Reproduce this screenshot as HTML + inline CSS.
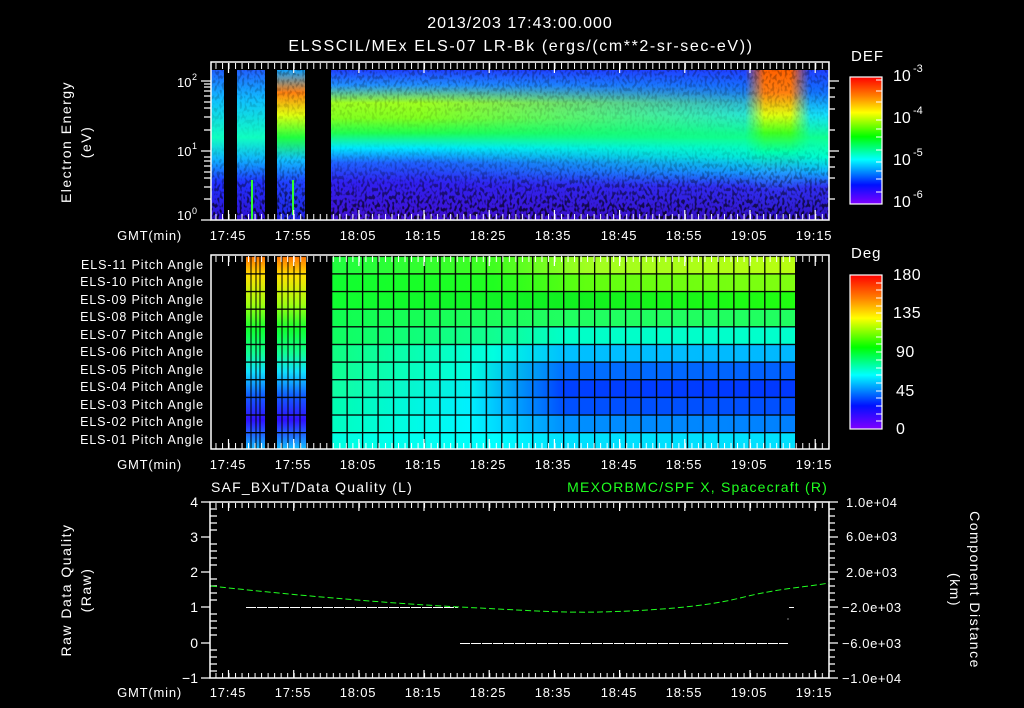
<!DOCTYPE html>
<html><head><meta charset="utf-8"><style>
html,body{margin:0;padding:0;background:#000;width:1024px;height:708px;overflow:hidden}
svg{display:block}
text{font-family:"Liberation Sans",sans-serif;fill:#fff}
</style></head><body>
<svg width="1024" height="708" viewBox="0 0 1024 708" xmlns="http://www.w3.org/2000/svg">
<defs>
<linearGradient id="cb" x1="0" y1="0" x2="0" y2="1">
<stop offset="0" stop-color="#ff0000"/><stop offset=".15" stop-color="#ff8000"/><stop offset=".28" stop-color="#ffff00"/><stop offset=".47" stop-color="#00ff00"/><stop offset=".65" stop-color="#00ffff"/><stop offset=".85" stop-color="#0010ff"/><stop offset="1" stop-color="#8000ff"/></linearGradient>
<linearGradient id="sD" x1="0" y1="0" x2="0" y2="1">
<stop offset="0" stop-color="#2040ff"/><stop offset=".1" stop-color="#2090ff"/><stop offset=".22" stop-color="#a0ff20"/><stop offset=".32" stop-color="#80ff20"/><stop offset=".42" stop-color="#20ff50"/><stop offset=".52" stop-color="#00e8ff"/><stop offset=".62" stop-color="#2060ff"/><stop offset=".75" stop-color="#3020f0"/><stop offset="1" stop-color="#4010d0"/></linearGradient>
<linearGradient id="sE" x1="0" y1="0" x2="0" y2="1">
<stop offset="0" stop-color="#2040ff"/><stop offset=".15" stop-color="#1070ff"/><stop offset=".3" stop-color="#10e0ff"/><stop offset=".45" stop-color="#10ff90"/><stop offset=".58" stop-color="#00ffd0"/><stop offset=".68" stop-color="#10b0ff"/><stop offset=".78" stop-color="#3030f0"/><stop offset="1" stop-color="#3010c0"/></linearGradient>
<linearGradient id="sF" x1="0" y1="0" x2="0" y2="1">
<stop offset="0" stop-color="#ff6000"/><stop offset=".15" stop-color="#ff8010"/><stop offset=".3" stop-color="#e0ff10"/><stop offset=".42" stop-color="#40ff20"/><stop offset=".55" stop-color="#00ffb0"/><stop offset=".68" stop-color="#20a0ff"/><stop offset=".8" stop-color="#3030f0"/><stop offset="1" stop-color="#3010c0"/></linearGradient>
<linearGradient id="sC" x1="0" y1="0" x2="0" y2="1">
<stop offset="0" stop-color="#10a0ff"/><stop offset=".15" stop-color="#ff8010"/><stop offset=".3" stop-color="#e0ff10"/><stop offset=".45" stop-color="#20ff40"/><stop offset=".6" stop-color="#10c0ff"/><stop offset=".75" stop-color="#2040ff"/><stop offset="1" stop-color="#2020e0"/></linearGradient>
<linearGradient id="sA" x1="0" y1="0" x2="0" y2="1">
<stop offset="0" stop-color="#2060ff"/><stop offset=".2" stop-color="#10c0ff"/><stop offset=".45" stop-color="#10ffc0"/><stop offset=".6" stop-color="#10b0ff"/><stop offset=".75" stop-color="#2030ff"/><stop offset="1" stop-color="#3010d0"/></linearGradient>
<linearGradient id="blendDE"><stop offset="0" stop-color="#000" stop-opacity="0"/><stop offset="1" stop-color="#000" stop-opacity="1"/></linearGradient>
<linearGradient id="fadeL"><stop offset="0" stop-color="#fff" stop-opacity="0"/><stop offset="1" stop-color="#fff" stop-opacity="1"/></linearGradient>
<linearGradient id="fadeLR"><stop offset="0" stop-color="#fff" stop-opacity="0"/><stop offset=".3" stop-color="#fff" stop-opacity="1"/><stop offset=".7" stop-color="#fff" stop-opacity="1"/><stop offset="1" stop-color="#fff" stop-opacity="0"/></linearGradient>
<mask id="mE"><rect x="420" y="62" width="410" height="160" fill="url(#fadeL)"/></mask>
<mask id="mF"><rect x="745" y="62" width="65" height="160" fill="url(#fadeLR)"/></mask>
<linearGradient id="hmask" x1="0" y1="0" x2="0" y2="1">
<stop offset="0" stop-color="#fff" stop-opacity=".3"/><stop offset=".5" stop-color="#fff" stop-opacity=".0"/><stop offset=".7" stop-color="#fff" stop-opacity=".25"/><stop offset="1" stop-color="#fff" stop-opacity=".8"/></linearGradient>
<mask id="nm"><rect x="211" y="62" width="618" height="158" fill="url(#hmask)"/></mask>
<filter id="noise" x="0" y="0" width="100%" height="100%">
<feTurbulence type="fractalNoise" baseFrequency="0.4 0.25" numOctaves="1" seed="4"/>
<feColorMatrix type="matrix" values="0 0 0 0 0  0 0 0 0 0  0 0 0 0 0  0 0 0 -7 3.6"/>
</filter>
<pattern id="tx" patternUnits="userSpaceOnUse" x="228.5" y="0" width="6.52" height="708"><rect x="0" y="0" width="1" height="708" fill="#fff"/></pattern>
<pattern id="gcol" patternUnits="userSpaceOnUse" x="331" y="0" width="15.47" height="708"><rect x="0" y="0" width="1.3" height="708" fill="#000"/></pattern>
<pattern id="grow" patternUnits="userSpaceOnUse" x="0" y="255.6" width="1024" height="17.64"><rect x="0" y="0" width="1024" height="1.3" fill="#000"/></pattern>
<linearGradient id="pr0"><stop offset="0" stop-color="#20ff40"/><stop offset=".35" stop-color="#40ff20"/><stop offset=".55" stop-color="#a0ff20"/><stop offset="1" stop-color="#b8ff10"/></linearGradient>
<linearGradient id="pr1"><stop offset="0" stop-color="#10ff30"/><stop offset=".35" stop-color="#20ff20"/><stop offset=".55" stop-color="#60ff10"/><stop offset="1" stop-color="#80ff10"/></linearGradient>
<linearGradient id="pr2"><stop offset="0" stop-color="#10ff30"/><stop offset=".5" stop-color="#10f020"/><stop offset="1" stop-color="#20ff10"/></linearGradient>
<linearGradient id="pr3"><stop offset="0" stop-color="#10ff50"/><stop offset=".5" stop-color="#20ff60"/><stop offset="1" stop-color="#20ff60"/></linearGradient>
<linearGradient id="pr4"><stop offset="0" stop-color="#10ff60"/><stop offset=".35" stop-color="#10ff90"/><stop offset=".5" stop-color="#00ffc8"/><stop offset="1" stop-color="#00ffcc"/></linearGradient>
<linearGradient id="pr5"><stop offset="0" stop-color="#10ff80"/><stop offset=".35" stop-color="#00ffe0"/><stop offset=".5" stop-color="#00c0ff"/><stop offset="1" stop-color="#00b8ff"/></linearGradient>
<linearGradient id="pr6"><stop offset="0" stop-color="#10ff90"/><stop offset=".3" stop-color="#00ffe0"/><stop offset=".5" stop-color="#0070ff"/><stop offset="1" stop-color="#0060ff"/></linearGradient>
<linearGradient id="pr7"><stop offset="0" stop-color="#10ffa0"/><stop offset=".3" stop-color="#00f0f0"/><stop offset=".5" stop-color="#0040ff"/><stop offset="1" stop-color="#0038ff"/></linearGradient>
<linearGradient id="pr8"><stop offset="0" stop-color="#00ffb0"/><stop offset=".3" stop-color="#00f0ff"/><stop offset=".5" stop-color="#0050ff"/><stop offset="1" stop-color="#0050ff"/></linearGradient>
<linearGradient id="pr9"><stop offset="0" stop-color="#00ffc0"/><stop offset=".3" stop-color="#00f8ff"/><stop offset=".5" stop-color="#0090ff"/><stop offset="1" stop-color="#0080ff"/></linearGradient>
<linearGradient id="pr10"><stop offset="0" stop-color="#00ffe0"/><stop offset=".35" stop-color="#00ffff"/><stop offset=".5" stop-color="#00e0ff"/><stop offset="1" stop-color="#00e0ff"/></linearGradient>
<linearGradient id="strip" x1="0" y1="0" x2="0" y2="1">
<stop offset="0" stop-color="#ff7000"/><stop offset=".1" stop-color="#ffe000"/><stop offset=".25" stop-color="#a0ff10"/><stop offset=".38" stop-color="#10ff30"/><stop offset=".5" stop-color="#10ff90"/><stop offset=".6" stop-color="#10e0ff"/><stop offset=".72" stop-color="#1060ff"/><stop offset=".85" stop-color="#3010ff"/><stop offset="1" stop-color="#10c0ff"/></linearGradient>
</defs>

<!-- titles -->
<text x="520" y="28" font-size="16" text-anchor="middle" letter-spacing="1">2013/203 17:43:00.000</text>
<text x="521" y="51" font-size="16" text-anchor="middle" letter-spacing="1.6">ELSSCIL/MEx ELS-07 LR-Bk  (ergs/(cm**2-sr-sec-eV))</text>

<!-- PANEL 1 spectrogram -->
<rect x="211" y="70" width="13" height="150" fill="url(#sA)"/>
<rect x="237" y="70" width="28" height="150" fill="url(#sA)"/>
<rect x="277" y="70" width="28" height="150" fill="url(#sC)"/>
<rect x="331" y="70" width="498" height="150" fill="url(#sD)"/>
<rect x="331" y="70" width="498" height="150" fill="url(#sE)" mask="url(#mE)"/>
<rect x="745" y="70" width="65" height="150" fill="url(#sF)" mask="url(#mF)"/>
<rect x="211" y="62" width="618" height="158" filter="url(#noise)" mask="url(#nm)"/>
<rect x="224" y="62" width="13" height="158" fill="#000"/>
<rect x="265" y="62" width="12" height="158" fill="#000"/>
<rect x="305" y="62" width="26" height="158" fill="#000"/>
<rect x="251" y="180" width="2" height="40" fill="#30ff30"/>
<rect x="292" y="180" width="2" height="35" fill="#30ff30"/>
<rect x="211" y="62" width="618" height="158" fill="none" stroke="#fff" stroke-width="1.5"/>
<rect x="211" y="63" width="618" height="6" fill="url(#tx)"/>
<rect x="211" y="214" width="618" height="6" fill="url(#tx)"/>
<g stroke="#fff" stroke-width="1.2">
<path d="M228.5 63v10M293.7 63v10M358.9 63v10M424 63v10M489.2 63v10M554.4 63v10M619.6 63v10M684.8 63v10M750 63v10M815.2 63v10"/>
<path d="M228.5 220v-10M293.7 220v-10M358.9 220v-10M424 220v-10M489.2 220v-10M554.4 220v-10M619.6 220v-10M684.8 220v-10M750 220v-10M815.2 220v-10"/>
<path d="M201 220h10M201 151h10M201 81h10M204 199h7M204 187h7M204 178h7M204 172h7M204 166h7M204 161h7M204 157h7M204 130h7M204 117h7M204 108h7M204 102h7M204 96h7M204 91h7M204 87h7M204 84h7"/>
<path d="M829 81h10M829 151h10M829 88h6M829 97h6M829 109h6M829 130h6M829 157h6M829 167h6M829 178h6M829 199h6"/>
</g>
<text x="177" y="220" font-size="13">10</text><text x="192" y="214" font-size="9">0</text>
<text x="177" y="156" font-size="13">10</text><text x="192" y="149" font-size="9">1</text>
<text x="177" y="87" font-size="13">10</text><text x="192" y="80" font-size="9">2</text>
<text transform="translate(71,142) rotate(-90)" font-size="14" text-anchor="middle" letter-spacing="1.5">Electron Energy</text>
<text transform="translate(91,142) rotate(-90)" font-size="14" text-anchor="middle" letter-spacing="1.5">(eV)</text>
<g font-size="13" letter-spacing="0.8">
<text x="182" y="240" text-anchor="end">GMT(min)</text>
<text x="228" y="240" text-anchor="middle">17:45</text><text x="293" y="240" text-anchor="middle">17:55</text><text x="358" y="240" text-anchor="middle">18:05</text><text x="423" y="240" text-anchor="middle">18:15</text><text x="488" y="240" text-anchor="middle">18:25</text><text x="553" y="240" text-anchor="middle">18:35</text><text x="619" y="240" text-anchor="middle">18:45</text><text x="684" y="240" text-anchor="middle">18:55</text><text x="749" y="240" text-anchor="middle">19:05</text><text x="814" y="240" text-anchor="middle">19:15</text>
</g>
<!-- DEF colorbar -->
<text x="851" y="61" font-size="15" letter-spacing="1">DEF</text>
<rect x="850" y="77" width="32" height="127" fill="url(#cb)" stroke="#fff" stroke-width="1.2"/>
<g stroke="#fff"><path d="M876 80h6M876 91h6M876 102h6M876 120h6M876 129h6M876 137h6M876 150h6M876 162h6M876 171h6M876 179h6M876 192h6"/></g>
<g font-size="16"><text x="893" y="81">10</text><text x="913" y="72" font-size="11">-3</text>
<text x="893" y="123">10</text><text x="913" y="114" font-size="11">-4</text>
<text x="893" y="165">10</text><text x="913" y="156" font-size="11">-5</text>
<text x="893" y="207">10</text><text x="913" y="198" font-size="11">-6</text></g>

<!-- PANEL 2 pitch -->
<rect x="331" y="256" width="464" height="17.7" fill="url(#pr0)"/>
<rect x="331" y="273.6" width="464" height="17.7" fill="url(#pr1)"/>
<rect x="331" y="291.2" width="464" height="17.7" fill="url(#pr2)"/>
<rect x="331" y="308.8" width="464" height="17.7" fill="url(#pr3)"/>
<rect x="331" y="326.4" width="464" height="17.7" fill="url(#pr4)"/>
<rect x="331" y="344" width="464" height="17.7" fill="url(#pr5)"/>
<rect x="331" y="361.6" width="464" height="17.7" fill="url(#pr6)"/>
<rect x="331" y="379.2" width="464" height="17.7" fill="url(#pr7)"/>
<rect x="331" y="396.8" width="464" height="17.7" fill="url(#pr8)"/>
<rect x="331" y="414.4" width="464" height="17.7" fill="url(#pr9)"/>
<rect x="331" y="432" width="464" height="17.4" fill="url(#pr10)"/>
<rect x="246" y="256" width="19" height="193" fill="url(#strip)"/>
<rect x="277" y="256" width="29" height="193" fill="url(#strip)"/>
<rect x="331" y="256" width="466" height="193" fill="url(#gcol)"/>
<rect x="246" y="256" width="551" height="193" fill="url(#grow)"/>
<g stroke="#000" stroke-width="1"><path d="M251 256v193M256 256v193M260 256v193M282 256v193M288 256v193M294 256v193M300 256v193"/></g>
<rect x="211" y="255" width="618" height="194" fill="none" stroke="#fff" stroke-width="1.5"/>
<rect x="211" y="256" width="618" height="6" fill="url(#tx)"/>
<rect x="211" y="443" width="618" height="6" fill="url(#tx)"/>
<g stroke="#fff" stroke-width="1.2">
<path d="M228.5 256v10M293.7 256v10M358.9 256v10M424 256v10M489.2 256v10M554.4 256v10M619.6 256v10M684.8 256v10M750 256v10M815.2 256v10"/>
<path d="M228.5 449v-10M293.7 449v-10M358.9 449v-10M424 449v-10M489.2 449v-10M554.4 449v-10M619.6 449v-10M684.8 449v-10M750 449v-10M815.2 449v-10"/>
</g>
<g font-size="12.5" text-anchor="end" letter-spacing="0.9">
<text x="204" y="269">ELS-11 Pitch Angle</text><text x="204" y="286">ELS-10 Pitch Angle</text><text x="204" y="304">ELS-09 Pitch Angle</text><text x="204" y="321">ELS-08 Pitch Angle</text><text x="204" y="339">ELS-07 Pitch Angle</text><text x="204" y="356">ELS-06 Pitch Angle</text><text x="204" y="374">ELS-05 Pitch Angle</text><text x="204" y="391">ELS-04 Pitch Angle</text><text x="204" y="409">ELS-03 Pitch Angle</text><text x="204" y="426">ELS-02 Pitch Angle</text><text x="204" y="444">ELS-01 Pitch Angle</text>
</g>
<g font-size="13" letter-spacing="0.8">
<text x="182" y="469" text-anchor="end">GMT(min)</text>
<text x="228" y="469" text-anchor="middle">17:45</text><text x="293" y="469" text-anchor="middle">17:55</text><text x="358" y="469" text-anchor="middle">18:05</text><text x="423" y="469" text-anchor="middle">18:15</text><text x="488" y="469" text-anchor="middle">18:25</text><text x="553" y="469" text-anchor="middle">18:35</text><text x="619" y="469" text-anchor="middle">18:45</text><text x="684" y="469" text-anchor="middle">18:55</text><text x="749" y="469" text-anchor="middle">19:05</text><text x="814" y="469" text-anchor="middle">19:15</text>
</g>
<!-- Deg colorbar -->
<text x="851" y="258" font-size="15" letter-spacing="1">Deg</text>
<rect x="850" y="275" width="32" height="154" fill="url(#cb)" stroke="#fff" stroke-width="1.2"/>
<g stroke="#fff"><path d="M876 283h6M876 290h6M876 298h6M876 306h6M876 313h6M876 321h6M876 329h6M876 337h6M876 344h6M876 352h6M876 360h6M876 368h6M876 375h6M876 383h6M876 391h6M876 398h6M876 406h6M876 414h6M876 421h6"/></g>
<g font-size="16" letter-spacing="0.5"><text x="893" y="280">180</text><text x="893" y="318">135</text><text x="896" y="357">90</text><text x="896" y="396">45</text><text x="896" y="434">0</text></g>

<!-- PANEL 3 -->
<text x="211" y="492" font-size="14" letter-spacing="1.2">SAF_BXuT/Data Quality (L)</text>
<text x="828" y="492" font-size="14" text-anchor="end" letter-spacing="1.2" style="fill:#20ff20">MEXORBMC/SPF X, Spacecraft (R)</text>
<rect x="210" y="502" width="619" height="176" fill="none" stroke="#fff" stroke-width="1.5"/>
<rect x="210" y="503" width="619" height="5" fill="url(#tx)"/>
<rect x="210" y="673" width="619" height="5" fill="url(#tx)"/>
<g stroke="#fff" stroke-width="1.2">
<path d="M228.5 503v8M293.7 503v8M358.9 503v8M424 503v8M489.2 503v8M554.4 503v8M619.6 503v8M684.8 503v8M750 503v8M815.2 503v8"/>
<path d="M228.5 678v-8M293.7 678v-8M358.9 678v-8M424 678v-8M489.2 678v-8M554.4 678v-8M619.6 678v-8M684.8 678v-8M750 678v-8M815.2 678v-8"/>
<path d="M201 502h9M201 537h9M201 572h9M201 607h9M201 643h9M201 678h9"/>
<path d="M210 509h7M210 516h7M210 523h7M210 530h7M210 544h7M210 551h7M210 558h7M210 565h7M210 579h7M210 586h7M210 593h7M210 600h7M210 614h7M210 621h7M210 628h7M210 635h7M210 650h7M210 657h7M210 664h7M210 671h7"/>
<path d="M829 502h9M829 537h9M829 572h9M829 607h9M829 643h9M829 678h9"/>
<path d="M829 509h6M829 516h6M829 523h6M829 530h6M829 544h6M829 551h6M829 558h6M829 565h6M829 579h6M829 586h6M829 593h6M829 600h6M829 614h6M829 621h6M829 628h6M829 635h6M829 650h6M829 657h6M829 664h6M829 671h6"/>
</g>
<g font-size="14" text-anchor="end"><text x="198" y="507">4</text><text x="198" y="542">3</text><text x="198" y="577">2</text><text x="198" y="612">1</text><text x="198" y="648">0</text><text x="198" y="683">−1</text></g>
<g font-size="13" letter-spacing="0.6"><text x="846" y="507">1.0e+04</text><text x="846" y="541">6.0e+03</text><text x="846" y="577">2.0e+03</text><text x="842" y="612">−2.0e+03</text><text x="842" y="648">−6.0e+03</text><text x="842" y="683">−1.0e+04</text></g>
<text transform="translate(71,590) rotate(-90)" font-size="14" text-anchor="middle" letter-spacing="1.5">Raw Data Quality</text>
<text transform="translate(91,590) rotate(-90)" font-size="14" text-anchor="middle" letter-spacing="1.5">(Raw)</text>
<text transform="translate(970,590) rotate(90)" font-size="14" text-anchor="middle" letter-spacing="1.5">Component Distance</text>
<text transform="translate(950,590) rotate(90)" font-size="14" text-anchor="middle" letter-spacing="1.5">(km)</text>
<path d="M246 607.5H458M460 643.5H788" stroke="#fff" stroke-width="1" stroke-dasharray="10,1"/>
<path d="M789 607.5h5M788 618.5v1" stroke="#fff" stroke-width="1"/>
<path d="M211 586 C300 596 400 604 460 607 S560 613 600 612 S700 608 740 598 S800 588 829 583" fill="none" stroke="#20ff20" stroke-width="1" stroke-dasharray="6,3"/>
<g font-size="13" letter-spacing="0.8">
<text x="182" y="697" text-anchor="end">GMT(min)</text>
<text x="228" y="697" text-anchor="middle">17:45</text><text x="293" y="697" text-anchor="middle">17:55</text><text x="358" y="697" text-anchor="middle">18:05</text><text x="423" y="697" text-anchor="middle">18:15</text><text x="488" y="697" text-anchor="middle">18:25</text><text x="553" y="697" text-anchor="middle">18:35</text><text x="619" y="697" text-anchor="middle">18:45</text><text x="684" y="697" text-anchor="middle">18:55</text><text x="749" y="697" text-anchor="middle">19:05</text><text x="814" y="697" text-anchor="middle">19:15</text>
</g>
</svg>
</body></html>
